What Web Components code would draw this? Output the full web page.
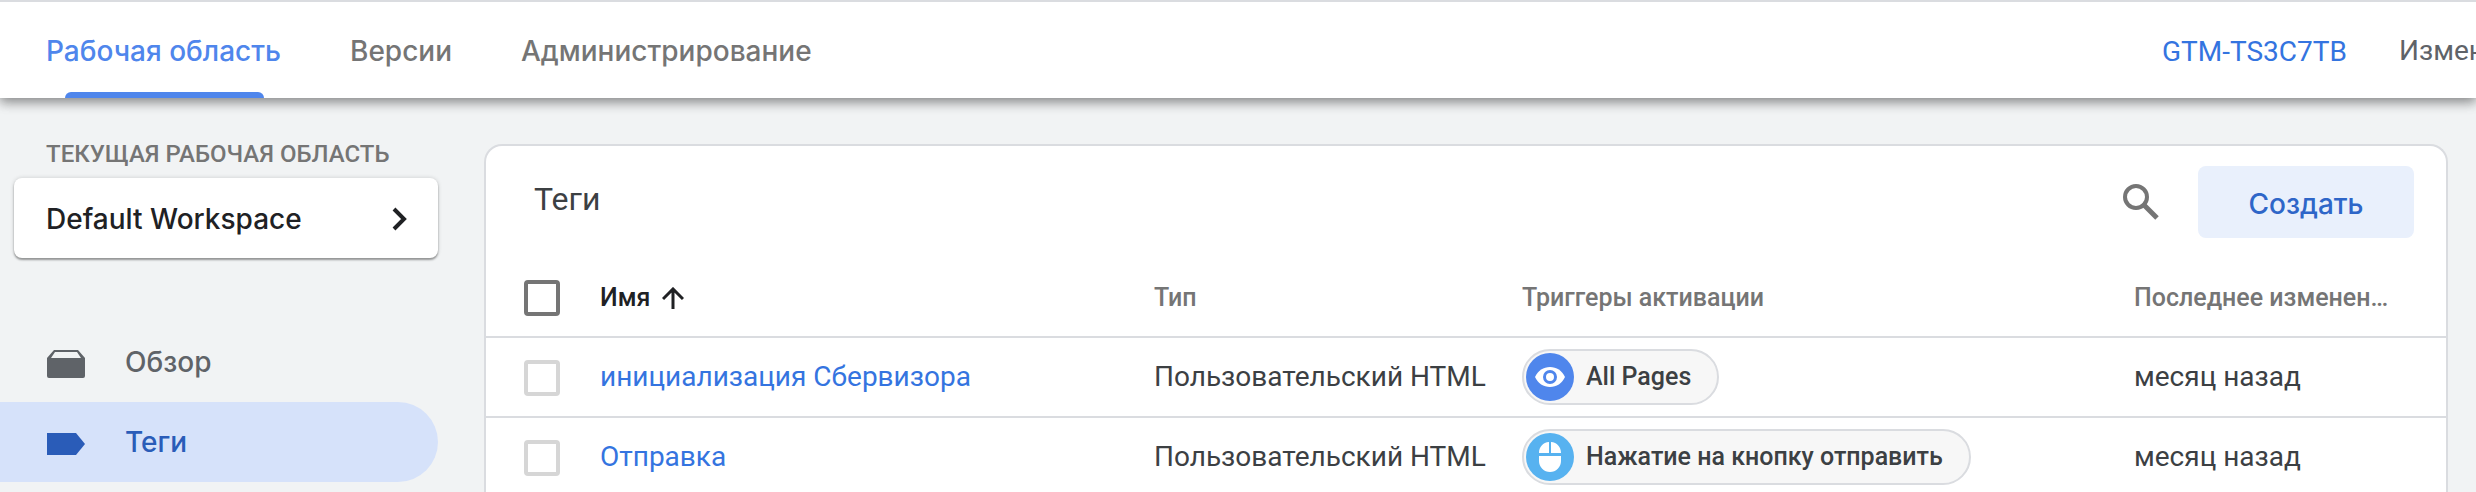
<!DOCTYPE html>
<html lang="ru">
<head>
<meta charset="utf-8">
<title>Теги – Диспетчер тегов</title>
<style>
  body {
    margin: 0;
    background: #f1f3f4;
    color: #3c4043;
    font: 400 28px/36px Roboto, "Liberation Sans", sans-serif;
    --brand: Inter, Roboto, sans-serif;
    --line: #dadce0;
    --grey: #757575;
    --blue: #4f86ec;
    --link: #3474e0;
  }
</style>
</head>
<body>
<gtm-app></gtm-app>

<template id="gtm-app">
  <style>
    :host { display: flex; flex-direction: column; height: 100vh; overflow: hidden; }
    .body { flex: 1; display: grid; grid-template-columns: 484px minmax(0, 1fr); min-height: 0; }
    main { padding: 46px 28px 0 0; }
  </style>
  <gtm-header></gtm-header>
  <div class="body">
    <gtm-sidebar></gtm-sidebar>
    <main><gtm-tags-panel></gtm-tags-panel></main>
  </div>
</template>

<template id="gtm-header">
  <style>
    :host {
      display: flex; justify-content: space-between; box-sizing: border-box; height: 98px;
      border-top: 2px solid var(--line); background: #fff;
      position: relative; z-index: 1;
      box-shadow: 0 6px 10px rgba(0,0,0,.16), 0 2px 12px rgba(0,0,0,.38);
    }
    nav { display: flex; gap: 69px; padding-left: 46px; }
    .info { display: flex; align-items: center; gap: 52px; width: 314px; padding-top: 4px; white-space: nowrap; overflow: hidden; }
    a { color: var(--link); text-decoration: none; }
    .changes { padding-bottom: 2px; color: #5f6368; }
  </style>
  <nav aria-label="Разделы">
    <gtm-tab active>Рабочая область</gtm-tab>
    <gtm-tab>Версии</gtm-tab>
    <gtm-tab>Администрирование</gtm-tab>
  </nav>
  <div class="info">
    <a href="#container">GTM-TS3C7TB</a>
    <span class="changes">Изменения</span>
  </div>
</template>

<template id="gtm-tab">
  <style>
    :host { display: flex; }
    a {
      display: flex; align-items: center; position: relative; padding-top: 2px;
      color: var(--grey); font: 500 28px/36px var(--brand); text-decoration: none; white-space: nowrap;
    }
    :host([active]) a { color: var(--blue); }
    :host([active]) a::after {
      content: ""; position: absolute; left: 19px; right: 17px; bottom: 0; height: 6px;
      border-radius: 6px 6px 0 0; background: var(--blue);
    }
  </style>
  <a href="#tab"><slot></slot></a>
</template>

<template id="gtm-sidebar">
  <style>
    :host { display: block; padding: 38px 46px 0 0; }
    h2 { margin: 0 0 6px 46px; font: 500 24px/36px Roboto, sans-serif; color: var(--grey); white-space: nowrap; }
    button {
      display: flex; align-items: center; justify-content: space-between; box-sizing: border-box;
      width: calc(100% - 14px); height: 80px; margin: 0 0 64px 14px; padding: 2px 30px 0 32px;
      border: 0; border-radius: 8px; background: #fff; color: #202124;
      font: 500 28px/36px var(--brand);
      box-shadow: 0 2px 2px rgba(0,0,0,.34), 0 0 4px rgba(0,0,0,.16);
    }
  </style>
  <h2>ТЕКУЩАЯ РАБОЧАЯ ОБЛАСТЬ</h2>
  <button type="button">Default Workspace
    <svg width="16" height="24" viewBox="0 0 16 24" fill="none" stroke="#202124" stroke-width="4" aria-hidden="true"><path d="M2 2l10 10L2 22"/></svg>
  </button>
  <nav aria-label="Рабочая область">
    <gtm-nav-item>
      <svg slot="icon" viewBox="0 0 38 28" width="38" height="28" aria-hidden="true">
        <path fill="#5f6368" fill-rule="evenodd" d="M7 0h24l7 8v18a2 2 0 0 1-2 2H2a2 2 0 0 1-2-2V8zM8 2L4 8h30l-4-6z"/>
      </svg>Обзор
    </gtm-nav-item>
    <gtm-nav-item active>
      <svg slot="icon" viewBox="0 0 38 22" width="38" height="22" aria-hidden="true">
        <path fill="#2a5cb8" d="M0 0h29l9 11-9 11H0z"/>
      </svg>Теги
    </gtm-nav-item>
  </nav>
</template>

<template id="gtm-nav-item">
  <style>
    :host { display: block; }
    a {
      display: flex; align-items: center; gap: 40px; height: 80px; padding-left: 47px;
      border-radius: 0 40px 40px 0; color: #5f6368; font: 500 28px/36px var(--brand); text-decoration: none;
    }
    .icon { display: flex; padding-top: 4px; }
    :host([active]) a { background: #d6e2fa; color: #2a5cb8; }
  </style>
  <a href="#section"><span class="icon"><slot name="icon"></slot></span><span><slot></slot></span></a>
</template>

<template id="gtm-tags-panel">
  <style>
    :host { display: block; border: 2px solid var(--line); border-bottom: 0; border-radius: 18px 18px 0 0; background: #fff; }
    header { display: flex; align-items: center; height: 112px; padding: 0 32px 0 48px; }
    h1 { flex: 1; margin: 0; padding-bottom: 6px; font: 400 32px/40px Roboto, sans-serif; }
    button { border: 0; margin: 0; padding: 0; }
    .search { display: flex; margin-right: 39px; background: none; }
    .create {
      box-sizing: border-box; width: 216px; height: 72px; padding-top: 4px; border-radius: 8px;
      background: #e9f0fc; color: #2e66c8; font: 500 28px/36px var(--brand);
    }
    table { width: 100%; table-layout: fixed; border-collapse: separate; border-spacing: 0; }
    th, td { box-sizing: border-box; height: 80px; padding: 0; text-align: left; white-space: nowrap; border-bottom: 2px solid var(--line); }
    th { padding-top: 2px; font: 500 25px/32px Roboto, sans-serif; color: var(--grey); }
    th.sorted { color: #202124; }
    th.last { padding-right: 52px; overflow: hidden; text-overflow: ellipsis; }
    .sort { display: inline-flex; align-items: center; gap: 12px; }
    .check { width: 114px; padding: 2px 0 0 38px; }
    .type { width: 368px; } .trig { width: 612px; } .last { width: 312px; }
    input {
      display: block; appearance: none; box-sizing: border-box; width: 36px; height: 36px; margin: 0;
      border: 4px solid #d6d6d6; border-radius: 4px; background: #fff;
    }
    th input { border-color: var(--grey); }
    td a { color: var(--link); text-decoration: none; }
  </style>
  <header>
    <h1>Теги</h1>
    <button class="search" type="button" aria-label="Поиск">
      <svg width="36" height="36" viewBox="0 0 36 36" fill="none" stroke="#757575" aria-hidden="true">
        <circle cx="13" cy="13" r="11" stroke-width="4"/><path d="M21 21l13 13" stroke-width="5"/><path d="M20 22l2-2" stroke-width="4"/>
      </svg>
    </button>
    <button class="create" type="button">Создать</button>
  </header>
  <table>
    <thead>
      <tr>
        <th class="check"><input type="checkbox" aria-label="Выбрать все"></th>
        <th class="sorted" aria-sort="ascending"><span class="sort">Имя
          <svg width="22" height="22" viewBox="0 0 22 22" fill="none" stroke="#202124" stroke-width="3" aria-hidden="true"><path d="M11 22V2M1 12L11 2l10 10"/></svg></span></th>
        <th class="type">Тип</th>
        <th class="trig">Триггеры активации</th>
        <th class="last">Последнее изменение</th>
      </tr>
    </thead>
    <tbody>
      <tr>
        <td class="check"><input type="checkbox" aria-label="инициализация Сбервизора"></td>
        <td><a href="#tag-1">инициализация Сбервизора</a></td>
        <td>Пользовательский HTML</td>
        <td><gtm-chip>
          <svg slot="icon" width="48" height="48" viewBox="0 0 48 48" aria-hidden="true">
            <circle cx="24" cy="24" r="24" fill="#4f86ec"/>
            <path fill="#fff" d="M9 24C12 17.500 17.500 14 24 14s12 3.500 15 10c-3 6.500-8.500 10-15 10S12 30.500 9 24z"/>
            <circle cx="24" cy="24" r="5.500" fill="#fff" stroke="#4f86ec" stroke-width="3"/>
          </svg>All Pages</gtm-chip></td>
        <td>месяц назад</td>
      </tr>
      <tr>
        <td class="check"><input type="checkbox" aria-label="Отправка"></td>
        <td><a href="#tag-2">Отправка</a></td>
        <td>Пользовательский HTML</td>
        <td><gtm-chip>
          <svg slot="icon" width="48" height="48" viewBox="0 0 48 48" aria-hidden="true">
            <circle cx="24" cy="24" r="24" fill="#57b2f0"/>
            <path fill="#fff" d="M23 9v11H13C13 14 17 9.500 23 9zM25 9c6 .5 10 5 10 11H25zM13 23h22v5a11 11 0 0 1-22 0z"/>
          </svg>Нажатие на кнопку отправить</gtm-chip></td>
        <td>месяц назад</td>
      </tr>
    </tbody>
  </table>
</template>

<template id="gtm-chip">
  <style>
    :host {
      display: flex; align-items: center; gap: 12px; box-sizing: border-box; width: fit-content; height: 56px;
      padding: 0 26px 0 2px; border: 2px solid var(--line); border-radius: 28px; background: #f7f7f7;
      font: 500 25px/32px Roboto, sans-serif;
    }
    .icon { display: flex; }
  </style>
  <span class="icon"><slot name="icon"></slot></span><span><slot></slot></span>
</template>

<script>
  for (const name of ['gtm-app', 'gtm-header', 'gtm-tab', 'gtm-sidebar', 'gtm-nav-item', 'gtm-tags-panel', 'gtm-chip']) {
    customElements.define(name, class extends HTMLElement {
      constructor() {
        super();
        this.attachShadow({ mode: 'open' })
          .append(document.getElementById(name).content.cloneNode(true));
      }
    });
  }
</script>
</body>
</html>
